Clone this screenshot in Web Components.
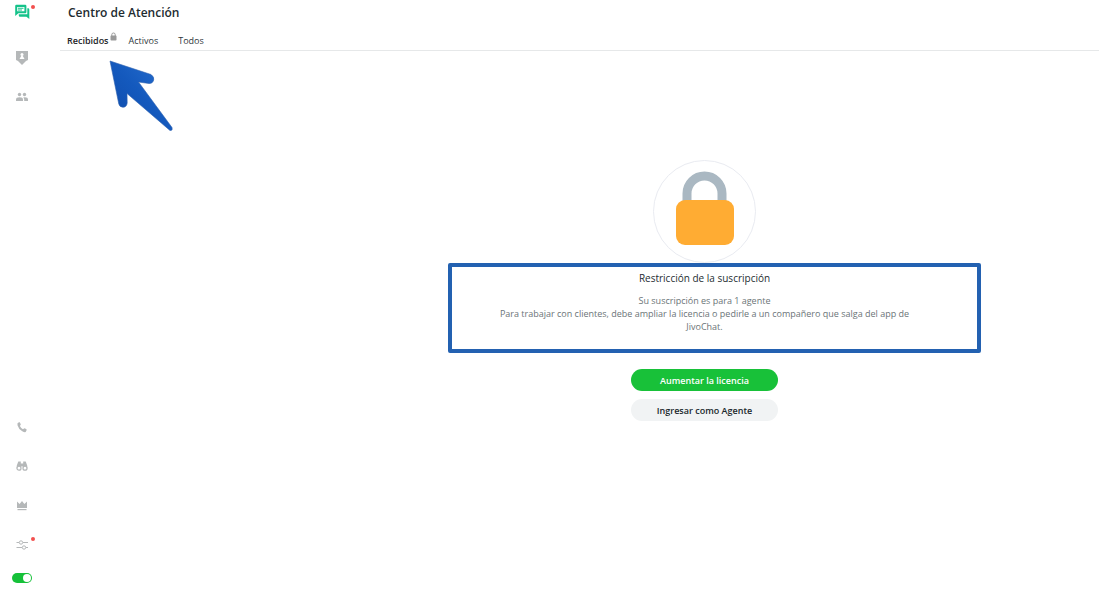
<!DOCTYPE html>
<html lang="es">
<head>
<meta charset="utf-8">
<title>Centro de Atención</title>
<style>
body { margin: 0; background: #fff; font-family: "Open Sans", "Noto Sans", sans-serif; color: #222b30; }
</style>
</head>
<body>
<app-shell></app-shell>

<template id="shell-t">
<style>
:host { display: flex; min-height: 100vh; }
main { flex: 1; min-width: 0; display: flex; flex-direction: column; }
.body { flex: 1; display: grid; grid-template-columns: 250px 1fr; }
.list { position: relative; }
tour-arrow { position: absolute; left: 47px; top: 8px; }
</style>
<side-nav></side-nav>
<main>
  <inbox-header></inbox-header>
  <div class="body">
    <div class="list"><tour-arrow></tour-arrow></div>
    <license-notice>
      <span slot="title">Restricción de la suscripción</span>
      <span slot="lead">Su suscripción es para 1 agente</span>
      <span slot="text">Para trabajar con clientes, debe ampliar la licencia o pedirle a un compañero que salga del app de JivoChat.</span>
    </license-notice>
  </div>
</main>
</template>

<template id="nav-t">
<style>
:host { display: block; width: 60px; }
nav { display: flex; flex-direction: column; gap: 19px; width: 44px; height: 100%; box-sizing: border-box; padding: 2px 0 18px; align-items: center; }
a { position: relative; display: block; width: 20px; height: 20px; color: #b5b8b9; }
a svg { display: block; width: 20px; height: 20px; }
a.main { color: #15c28a; margin-bottom: 7px; }
a.dot::after { content: ""; position: absolute; right: -3px; top: 3px; width: 4px; height: 4px; border-radius: 50%; background: #f2504e; }
.push { margin-top: auto; }
input { appearance: none; margin: 0; width: 20px; height: 10px; border-radius: 5px; background: #16c139; display: flex; justify-content: flex-end; align-items: center; padding: 0 1px; box-sizing: border-box; }
input::before { content: ""; width: 8px; height: 8px; border-radius: 50%; background: #fff; }
</style>
<nav aria-label="Principal">
  <a class="main dot" href="#chats" aria-label="Chats"><svg viewBox="0 0 20 20" fill="currentColor"><path fill-rule="evenodd" d="M4.400 2.800h8.800q1.200 0 1.200 1.200v6q0 1.200-1.200 1.200H6.400L3.200 14V4Q3.200 2.800 4.400 2.800zM5.200 4.900v4.300h7.200V4.900z"/><path d="M6 5.700h5.500v1H6zM6 7.500h4v1H6z"/><path d="M15.300 6.200h.8q1.200 0 1.200 1.200V17l-2.900-2.300H8q-1.200 0-1.200-1.200v-1.300h8.500z"/></svg></a>
  <a href="#visitors" aria-label="Visitantes"><svg viewBox="0 0 20 20"><path fill="currentColor" d="M4 3h12v9l-2 1-4 4-4-4-2-1z"/><circle cx="10" cy="6.500" r="1.500" fill="#fff"/><path fill="#fff" d="M9.200 8h1.600l1.700 3h-5z"/></svg></a>
  <a href="#team" aria-label="Equipo"><svg viewBox="0 0 20 20" fill="currentColor"><circle cx="7.500" cy="7.500" r="1.700"/><circle cx="12.500" cy="7.500" r="1.700"/><path d="M4 14v-1.500q0-2.300 3.500-2.300t3.500 2.300V14z"/><path d="M12.200 14v-1.500q0-1.300-1-2.100 4.800-.6 4.800 2.100V14z"/></svg></a>
  <a class="push" href="#calls" aria-label="Llamadas"><svg viewBox="0 0 20 20"><path fill="currentColor" d="M5.500 6.200 7.300 5q1 .8 1.500 2.600L7.900 9q1.100 2.300 3.100 3.200l1.300-.9q1.600.4 2.500 1.500L13.700 15q-1.200.5-3.400-.8-4-2.500-4.800-6z"/></svg></a>
  <a href="#monitor" aria-label="Monitor"><svg viewBox="0 0 20 20"><path fill="currentColor" d="M6.300 5.500h2.500v2h2.400v-2h2.500l1.500 4v3h-4v-2H8.800v2h-4v-3z"/><circle cx="7" cy="12.200" r="2" fill="#fff" stroke="currentColor" stroke-width="1.200"/><circle cx="13" cy="12.200" r="2" fill="#fff" stroke="currentColor" stroke-width="1.200"/></svg></a>
  <a href="#plan" aria-label="Plan"><svg viewBox="0 0 20 20" fill="currentColor"><path d="M5 6.500 7.600 9 10 6l2.400 3L15 6.500V13H5z"/><path d="M5.500 14h9v1.200h-9z"/></svg></a>
  <a class="dot" href="#settings" aria-label="Ajustes"><svg viewBox="0 0 20 20" fill="none" stroke="currentColor" stroke-width="1"><path d="M4.500 8.500H7M11 8.500h5M4.500 13.500H10M14 13.500h2"/><circle cx="9" cy="8.500" r="1.700"/><circle cx="12" cy="13.500" r="1.700"/></svg></a>
  <input type="checkbox" role="switch" checked aria-label="En línea">
</nav>
</template>

<template id="header-t">
<style>
:host { display: block; border-bottom: 1px solid #e6e8e9; height: 50px; }
h1 { margin: 0; padding: 4px 8px 0; font-size: 12px; line-height: 18px; font-weight: 600; }
nav { display: flex; gap: 12px; padding: 10px 7px 0; }
a { color: #30383c; text-decoration: none; font-size: 9px; line-height: 18px; display: flex; }
a.on { font-weight: 600; color: #1d2528; }
a:last-child { margin-left: 8px; }
svg { width: 7px; height: 9px; margin-left: 1px; }
</style>
<h1>Centro de Atención</h1>
<nav aria-label="Bandejas">
  <a class="on" href="#inbox">Recibidos<svg viewBox="0 0 7 9" aria-hidden="true"><path d="M1.800 4V2.600Q1.800 1 3.500 1t1.700 1.600V4" fill="none" stroke="#999"/><rect x="0.500" y="3.600" width="6" height="5" rx=".8" fill="#999"/></svg></a>
  <a href="#active">Activos</a>
  <a href="#all">Todos</a>
</nav>
</template>

<template id="arrow-t">
<style>:host { display: block; } svg { display: block; }</style>
<svg width="70" height="76" viewBox="107 59 70 76" aria-hidden="true">
  <defs><linearGradient id="g" x1="0" y1="1" x2="1" y2="0"><stop offset="0" stop-color="#0f4aa8"/><stop offset=".5" stop-color="#1459bd"/><stop offset="1" stop-color="#2a72d2"/></linearGradient></defs>
  <path fill="url(#g)" stroke="#2b5fae" stroke-width=".6" d="M110 61 151 74.500Q154.500 77 153.700 80 152.500 83.800 149 83.500L138.500 82 172 127.500Q173 131 170 130.500L127 93.500 127.200 103Q126.500 107.300 123 107.300 119.700 107.200 118.800 104z"/>
</svg>
</template>

<template id="notice-t">
<style>
:host { display: flex; flex-direction: column; align-items: center; padding: 109px 24px 24px; }
.lock { display: block; width: 103px; height: 104px; }
section { position: relative; width: 415px; max-width: 100%; text-align: center; padding: 5px 0 36px; }
.frame { position: absolute; inset: -1px -69px 16px -49px; border: 4px solid #2361b1; border-radius: 2px; pointer-events: none; }
h2 { margin: 0; font-size: 10px; line-height: 18px; font-weight: 400; color: #252d31; }
p { margin: 0; font-size: 9px; line-height: 13px; color: #6b7477; }
p.lead { margin-top: 7px; }
.actions { display: flex; flex-direction: column; gap: 8px; width: 147px; }
</style>
<svg class="lock" viewBox="0 0 103 104" aria-hidden="true">
  <circle cx="51.500" cy="51.500" r="51" fill="#fff" stroke="#e9ebf1"/>
  <path d="M34 45V33.500a17.500 17.500 0 0 1 35 0V45" fill="none" stroke="#aab8c2" stroke-width="9"/>
  <rect x="23" y="40" width="58" height="45" rx="9" fill="#ffac33"/>
</svg>
<section>
  <div class="frame"></div>
  <h2><slot name="title"></slot></h2>
  <p class="lead"><slot name="lead"></slot></p>
  <p><slot name="text"></slot></p>
</section>
<div class="actions">
  <pill-button kind="primary">Aumentar la licencia</pill-button>
  <pill-button>Ingresar como Agente</pill-button>
</div>
</template>

<template id="button-t">
<style>
:host { display: block; }
button { display: block; width: 100%; height: 22px; border: 0; border-radius: 11px; padding: 1px 0 0; font: 600 9px/20px "Open Sans", "Noto Sans", sans-serif; background: #f1f3f4; color: #20282c; }
:host([kind="primary"]) button { background: #18c139; color: #fff; }
</style>
<button type="button"><slot></slot></button>
</template>

<script>
const define = (name, templateId) => customElements.define(name, class extends HTMLElement {
  constructor() {
    super();
    this.attachShadow({ mode: "open" }).append(document.getElementById(templateId).content.cloneNode(true));
  }
});
define("pill-button", "button-t");
define("tour-arrow", "arrow-t");
define("inbox-header", "header-t");
define("side-nav", "nav-t");
define("license-notice", "notice-t");
define("app-shell", "shell-t");
</script>
</body>
</html>
